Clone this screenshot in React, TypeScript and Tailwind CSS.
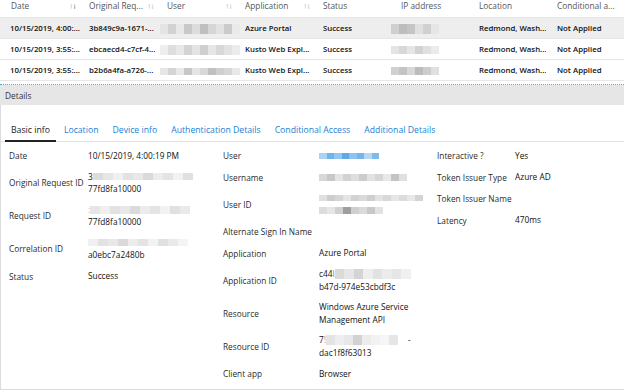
import type { ReactNode } from "react";

const columns = [
  { title: "Date", sort: "down" },
  { title: "Original Req...", sort: "both" },
  { title: "User", sort: "both" },
  { title: "Application", sort: "both" },
  { title: "Status" },
  { title: "IP address" },
  { title: "Location" },
  { title: "Conditional a..." },
];

const rows = [
  {
    date: "10/15/2019, 4:00:...",
    req: "3b849c9a-1671-...",
    app: "Azure Portal",
    user: ["#e4e4e4", "#d2d2d2", "#e8e8e8", "#c8c8c8", "#dcdcdc", "#bfbfbf", "#d6d6d6", "#e2e2e2", "#cbcbcb", "#eaeaea"],
    ip: ["#cfcfcf", "#bdbdbd", "#c4c4c4", "#e0e0e0", "#d0d0d0", "#e6e6e6"],
    selected: true,
  },
  {
    date: "10/15/2019, 3:55:...",
    req: "ebcaecd4-c7cf-4...",
    app: "Kusto Web Expl...",
    user: ["#eeeeee", "#dedede", "#e8e8e8", "#d4d4d4", "#e4e4e4", "#cfcfcf", "#e6e6e6", "#d8d8d8", "#e2e2e2", "#ececec"],
    ip: ["#e4e4e4", "#d8d8d8", "#e6e6e6", "#d2d2d2", "#e0e0e0", "#ebebeb"],
  },
  {
    date: "10/15/2019, 3:55:...",
    req: "b2b6a4fa-a726-...",
    app: "Kusto Web Expl...",
    user: ["#e6e6e6", "#d4d4d4", "#e8e8e8", "#c6c6c6", "#e4e4e4", "#d8d8d8", "#c0c0c0", "#cfcfcf", "#d6d6d6", "#e8e8e8"],
    ip: ["#d0d0d0", "#c4c4c4", "#d8d8d8", "#bcbcbc", "#cdcdcd", "#e0e0e0"],
  },
];

const tabs = ["Basic info", "Location", "Device info", "Authentication Details", "Conditional Access", "Additional Details"];

function SortIcon({ mode }: { mode: string }) {
  return (
    <svg width="6" height="5" viewBox="0 0 7 6" className="mr-[1px] shrink-0">
      <path d="M1.5 5.6V0.6M0.5 1.6L1.5 0.6L2.5 1.6" stroke="#c6c6c6" strokeWidth="0.8" fill="none" />
      <path
        d="M5.5 0.4V5.4M4.5 4.4L5.5 5.4L6.5 4.4"
        stroke={mode === "down" ? "#8a8a8a" : "#c6c6c6"}
        strokeWidth="0.8"
        fill="none"
      />
    </svg>
  );
}

function Blur({ c, w = 8, h = 7 }: { c: string[]; w?: number; h?: number }) {
  return (
    <span className="inline-flex align-middle">
      {c.map((col, i) => (
        <span key={i} style={{ background: col, width: w, height: h }} />
      ))}
    </span>
  );
}

function Field({ label, lw, children }: { label: string; lw: string; children: ReactNode }) {
  return (
    <div className="flex items-center py-[4px]">
      <div className={`${lw} shrink-0 leading-[13.5px] text-[#2b2b2b]`}>{label}</div>
      <div className="leading-[12.5px] text-[#111]">{children}</div>
    </div>
  );
}

function Line({ children }: { children: ReactNode }) {
  return <div className="flex h-[12.5px] items-center whitespace-nowrap">{children}</div>;
}

const lightBlur = ["#dcdcdc", "#e6e6e6", "#f0f0f0", "#e2e2e2", "#e8e8e8", "#dadada", "#ececec", "#e4e4e4", "#f2f2f2", "#e0e0e0", "#eaeaea", "#f4f4f4"];

export default function App() {
  const L = "w-[79px]";
  const M = "w-[96px]";
  const R = "w-[78px]";
  return (
    <div className="h-[390px] w-[624px] overflow-hidden bg-white font-['Open_Sans',sans-serif]">
      {/* grid */}
      <div className="flex h-[18px] border-b border-[#e6e6e6] text-[8.3px] text-[#555]">
        {columns.map((col) => (
          <div key={col.title} className="flex w-[78px] items-center pb-[4px] pl-[11px] pr-[1px]">
            <span className="flex-1 whitespace-nowrap">{col.title}</span>
            {col.sort && <SortIcon mode={col.sort} />}
          </div>
        ))}
      </div>
      {rows.map((r, i) => (
        <div
          key={i}
          className={`flex h-[21px] items-center border-b border-[#e6e6e6] pt-[2px] text-[7.8px] font-semibold text-[#111] ${
            r.selected ? "bg-[#eeeeee]" : ""
          }`}
        >
          <div className="w-[78px] whitespace-nowrap pl-[10px]">{r.date}</div>
          <div className="w-[78px] overflow-hidden whitespace-nowrap pl-[11px]">{r.req}</div>
          <div className="w-[78px] pl-[4px]">
            <Blur c={r.user} w={8} h={i === 2 ? 7 : 10} />
          </div>
          <div className="w-[78px] overflow-hidden whitespace-nowrap pl-[11px]">{r.app}</div>
          <div className="w-[78px] overflow-hidden whitespace-nowrap pl-[11px]">Success</div>
          <div className="w-[78px] pl-[1px]">
            <Blur c={r.ip} w={8} h={i === 0 ? 10 : 8} />
          </div>
          <div className="w-[78px] overflow-hidden whitespace-nowrap pl-[11px]">Redmond, Wash...</div>
          <div className="w-[78px] overflow-hidden whitespace-nowrap pl-[11px]">Not Applied</div>
        </div>
      ))}
      <div className="h-[3px]" />
      <div className="border-t border-dotted border-[#2fb0e9]" />

      {/* details */}
      <div className="flex h-[20px] items-center bg-[#e6e6e6] pl-[5px] pt-[2px] text-[8.3px] text-[#333]">Details</div>
      <div className="h-[285px] border-b border-l border-[#dcdcdc] text-[8.3px]">
        <div className="flex gap-[2px] border-b border-[#e3e3e3] pl-[4px] pt-[19px] text-[8.7px]">
          {tabs.map((t, i) => (
            <div
              key={t}
              className={`-mb-px border-b-2 px-[6px] pb-[3px] leading-[13px] ${
                i === 0 ? "border-[#222] text-[#222]" : "border-transparent text-[#1a7fd4]"
              }`}
            >
              {t}
            </div>
          ))}
        </div>

        <div className="flex pt-[3px]">
          <div className="w-[222px] pl-[8px]">
            <Field label="Date" lw={L}>10/15/2019, 4:00:19 PM</Field>
            <Field label="Original Request ID" lw={L}>
              <Line>
                3<Blur c={lightBlur.slice(0, 10)} w={10} h={7} />
              </Line>
              <Line>77fd8fa10000</Line>
            </Field>
            <Field label="Request ID" lw={L}>
              <Line>
                <span className="text-[#bbb]">:</span>
                <Blur c={lightBlur.slice(1, 11)} w={10} h={8} />
              </Line>
              <Line>77fd8fa10000</Line>
            </Field>
            <Field label="Correlation ID" lw={L}>
              <Line>
                <Blur c={lightBlur.slice(2, 12)} w={10} h={7} />
              </Line>
              <Line>a0ebc7a2480b</Line>
            </Field>
            <Field label="Status" lw={L}>Success</Field>
          </div>

          <div className="w-[214px]">
            <Field label="User" lw={M}>
              <Line>
                <Blur c={["#a9d2f3", "#6fb4ea", "#94c6f0", "#5ea9e6", "#8dc2ee", "#74b6eb", "#b4d8f4", "#7cbaec"]} w={7.5} h={6} />
              </Line>
            </Field>
            <Field label="Username" lw={M}>
              <Line>
                <Blur c={["#d8d8d8", "#c8c8c8", "#e4e4e4", "#d2d2d2", "#dedede", "#cccccc", "#e2e2e2", "#d6d6d6", "#e8e8e8", "#c4c4c4", "#e0e0e0"]} w={8} h={7} />
              </Line>
            </Field>
            <Field label="User ID" lw={M}>
              <Line>
                <Blur c={["#e0e0e0", "#cdcdcd", "#d6d6d6", "#e4e4e4", "#d2d2d2", "#dadada", "#cfcfcf", "#e2e2e2", "#d8d8d8", "#e6e6e6", "#dcdcdc", "#e8e8e8", "#d4d4d4"]} w={8} h={6} />
              </Line>
              <Line>
                <Blur c={["#dcdcdc", "#e6e6e6", "#d0d0d0", "#9e9e9e", "#cfcfcf", "#dadada", "#c8c8c8", "#e2e2e2"]} w={8} h={7} />
              </Line>
            </Field>
            <Field label="Alternate Sign In Name" lw={M}>
              <span />
            </Field>
            <Field label="Application" lw={M}>Azure Portal</Field>
            <Field label="Application ID" lw={M}>
              <Line>
                c44<span className="text-[#888]">l</span>
                <Blur c={["#dadada", "#e6e6e6", "#d4d4d4", "#eeeeee", "#e2e2e2", "#ececec", "#e6e6e6", "#f0f0f0"]} w={9.5} h={10} />
              </Line>
              <Line>b47d-974e53cbdf3c</Line>
            </Field>
            <Field label="Resource" lw={M}>
              <Line>Windows Azure Service</Line>
              <Line>Management API</Line>
            </Field>
            <Field label="Resource ID" lw={M}>
              <Line>
                7<span className="text-[#999]">!</span>
                <Blur c={["#e4e4e4", "#eeeeee", "#e8e8e8", "#d2d2d2", "#ececec", "#f2f2f2", "#f6f6f6", "#e6e6e6"]} w={9} h={10} />
                <span className="ml-[10px]">-</span>
              </Line>
              <Line>dac1f8f63013</Line>
            </Field>
            <Field label="Client app" lw={M}>Browser</Field>
          </div>

          <div className="flex-1">
            <Field label="Interactive ?" lw={R}>Yes</Field>
            <Field label="Token Issuer Type" lw={R}>Azure AD</Field>
            <Field label="Token Issuer Name" lw={R}>
              <span />
            </Field>
            <Field label="Latency" lw={R}>470ms</Field>
          </div>
        </div>
      </div>
    </div>
  );
}
